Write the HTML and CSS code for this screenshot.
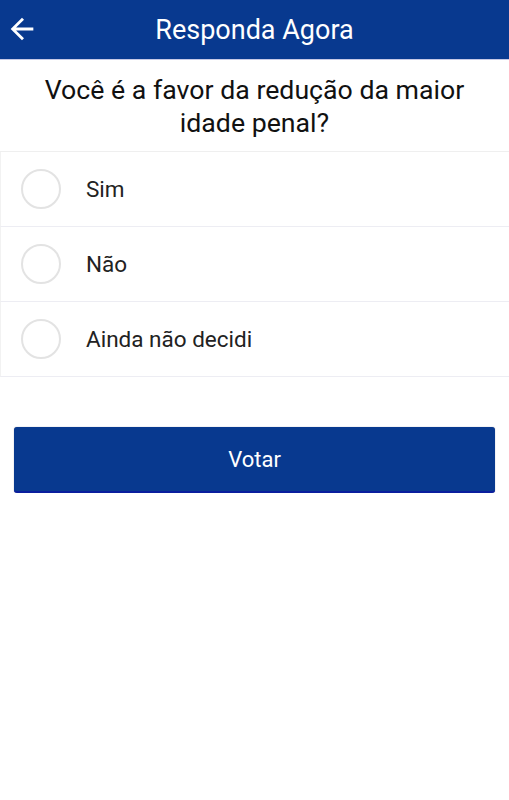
FILE: index.html
```html
<!DOCTYPE html>
<html lang="pt">
<head>
    <meta charset="UTF-8">
    <meta name="viewport" content="width=device-width, initial-scale=1.0">
    <title>Responda Agora</title>
    <link rel="stylesheet" href="styles.css">
</head>
<body>
    <div id="header">
        <button class="back-button" aria-label="Voltar">
            <svg width="34" height="34" viewBox="0 0 24 24">
                <path d="M20 11H7.83l5.59-5.59L12 4l-8 8 8 8 1.41-1.41L7.83 13H20v-2z" fill="#fff"/>
            </svg>
        </button>
        <h1>Responda Agora</h1>
    </div>
    <div id="poll">
        <h2 class="question">Você é a favor da redução da maior idade penal?</h2>
        <div class="options">
            <label class="option"><span class="radio"></span><span>Sim</span></label>
            <label class="option"><span class="radio"></span><span>Não</span></label>
            <label class="option"><span class="radio"></span><span>Ainda não decidi</span></label>
        </div>
        <button class="vote-button">Votar</button>
    </div>
</body>
</html>
```

FILE: styles.css
```css
body {
    font-family: 'Roboto', 'Liberation Sans', sans-serif;
    background-color: #fff;
    margin: 0;
    color: #222;
}
#header {
    height: 59px;
    background-color: #08398f;
    border-bottom: 1px solid #c7c9e6;
    display: flex;
    align-items: center;
    justify-content: center;
    position: relative;
}
#header h1 {
    margin: 0;
    color: white;
    font-size: 27px;
    font-weight: 400;
}
.back-button {
    position: absolute;
    left: 5px;
    top: 12px;
    background: none;
    border: none;
    padding: 0;
    width: 34px;
    height: 34px;
}
.question {
    margin: 0 auto;
    max-width: 450px;
    padding: 14px 0 11px;
    font-size: 26.7px;
    font-weight: 400;
    line-height: 33px;
    text-align: center;
    color: #111;
}
.options {
    border-top: 1px solid #efefef;
}
.option {
    display: flex;
    align-items: center;
    height: 74px;
    border-bottom: 1px solid #ededf3;
    border-left: 1px solid #f2f2f2;
    padding-left: 20px;
    font-size: 22.5px;
    color: #222;
}
.radio {
    width: 36px;
    height: 36px;
    border: 2px solid #e3e3e3;
    border-radius: 50%;
    margin-right: 25px;
}
.vote-button {
    display: block;
    margin: 50px 14px 0;
    width: 481px;
    height: 66px;
    background-color: #08398f;
    border: none;
    border-bottom: 2px solid #0a1f9e;
    border-radius: 3px;
    box-shadow: 0 0 1px rgba(0,0,60,0.5);
    color: white;
    font-family: inherit;
    font-size: 22px;
}
```
